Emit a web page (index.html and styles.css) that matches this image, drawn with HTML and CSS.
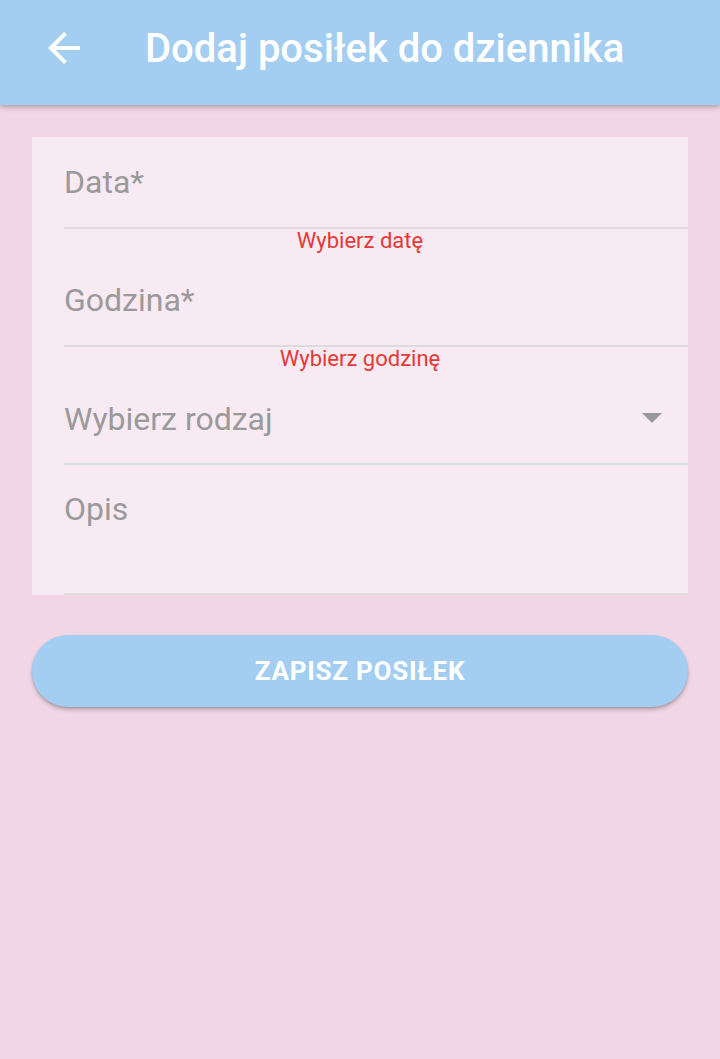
FILE: index.html
```html
<!DOCTYPE html>
<html lang="pl">
<head>
<meta charset="utf-8">
<title>Dodaj posiłek do dziennika</title>
<link rel="stylesheet" href="styles.css">
</head>
<body>
<header class="appbar">
  <button class="back" aria-label="Wstecz">
    <svg viewBox="0 0 24 24" width="48" height="48"><path fill="#fff" d="M20 11H7.83l5.59-5.59L12 4l-8 8 8 8 1.41-1.41L7.83 13H20v-2z"/></svg>
  </button>
  <h1 class="title">Dodaj posiłek do dziennika</h1>
</header>
<main class="content">
  <form class="card">
    <div class="field field-date"><span class="label">Data*</span></div>
    <div class="error">Wybierz datę</div>
    <div class="field field-time"><span class="label">Godzina*</span></div>
    <div class="error">Wybierz godzinę</div>
    <div class="field field-select">
      <span class="label">Wybierz rodzaj</span>
      <svg class="drop" viewBox="0 0 24 24" width="48" height="48"><path fill="#999" d="M7 10l5 5 5-5z"/></svg>
    </div>
    <div class="field field-desc"><span class="label">Opis</span></div>
  </form>
  <button class="save" type="button">ZAPISZ POSIŁEK</button>
</main>
</body>
</html>
```
FILE: styles.css
```css
* { box-sizing: border-box; }
html, body { margin: 0; padding: 0; }
body {
  background: #f1d7e6;
  font-family: Roboto, "Liberation Sans", sans-serif;
  width: 720px;
  min-height: 1059px;
}
.appbar {
  height: 105px;
  background: #a3cef1;
  display: flex;
  align-items: flex-start;
  padding: 24px 0 0 40px;
  box-shadow: 0 2px 4px rgba(0,0,0,0.18), 0 4px 6px rgba(0,0,0,0.08);
  position: relative;
  z-index: 1;
}
.back {
  width: 48px;
  height: 48px;
  padding: 0;
  border: 0;
  background: none;
  display: block;
}
.back svg { display: block; }
.title {
  margin: 5px 0 0 57px;
  font-size: 40px;
  line-height: 40px;
  font-weight: 500;
  color: #fff;
}
.content {
  padding: 32px 32px 0;
  display: flex;
  flex-direction: column;
}
.card {
  background: #f8eaf2;
  display: flex;
  flex-direction: column;
  margin: 0;
}
.field {
  flex: none;
  margin-left: 32px;
  border-bottom: 2px solid #dcdcdc;
  display: flex;
  align-items: flex-start;
}
.field-date { height: 92px; padding-top: 29px; }
.field-time { height: 92px; padding-top: 29px; }
.field-select { height: 92px; padding-top: 30px; position: relative; }
.field-desc { height: 130px; padding-top: 28px; }
.label {
  font-size: 32px;
  line-height: 32px;
  color: #9a9a9a;
}
.drop {
  position: absolute;
  right: 12px;
  top: 20px;
}
.error {
  flex: none;
  height: 26px;
  font-size: 22px;
  line-height: 24px;
  color: #e53935;
  text-align: center;
}
.save {
  margin-top: 40px;
  height: 72px;
  border: 0;
  border-radius: 36px;
  background: #a3cef1;
  color: #fff;
  font-family: Roboto, "Liberation Sans", sans-serif;
  font-size: 26px;
  font-weight: 700;
  letter-spacing: 0.75px;
  box-shadow: 0 3px 4px rgba(0,0,0,0.22), 0 1px 2px rgba(0,0,0,0.12);
}
```
